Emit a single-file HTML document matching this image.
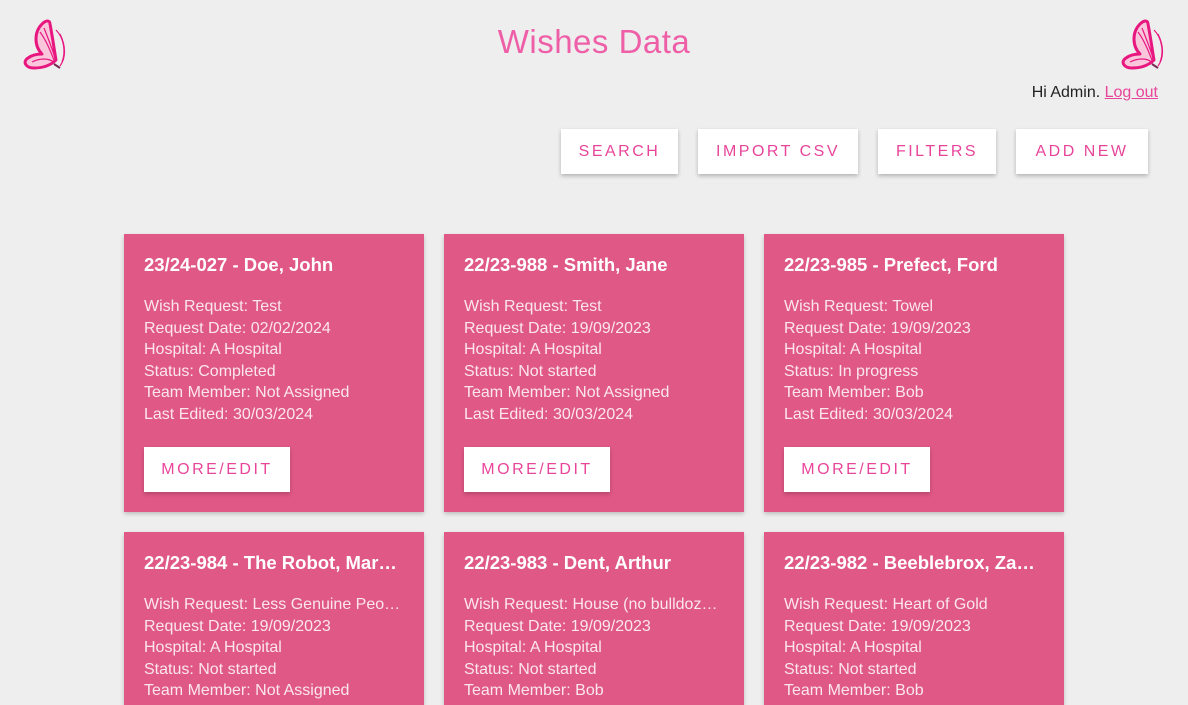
<!DOCTYPE html>
<html style="height:705px;overflow:hidden"><head><meta charset="utf-8"><style>
body{margin:0;background:#eeeeee;font-family:"Liberation Sans",sans-serif;width:1188px;height:705px;overflow:hidden;position:relative}
h1{position:absolute;top:23px;left:0;width:1188px;text-align:center;margin:0;font-weight:normal;font-size:33px;color:#ee5fa8;letter-spacing:0.5px}
.logo{position:absolute;top:18px}
.hi{position:absolute;top:84px;right:30px;font-size:16px;color:#222}
.hi a{color:#e8459a;text-decoration:underline}
.btn{position:absolute;top:129px;height:45px;background:#fff;color:#e8459a;font-size:16px;letter-spacing:2.5px;box-shadow:0 2px 4px rgba(0,0,0,.25);display:flex;align-items:center;justify-content:center}
.card{position:absolute;width:300px;height:278px;background:#e05886;color:#fff;box-shadow:0 2px 4px rgba(0,0,0,.2);overflow:hidden}
.card.b{height:173px}
.card h2{margin:0;position:absolute;left:20px;top:20px;font-size:18.5px;width:254px;white-space:nowrap;overflow:hidden;text-overflow:ellipsis}
.card .d{position:absolute;left:20px;top:62px;font-size:16px;line-height:21.5px;width:260px;color:#fbe6ee}
.card .d div{white-space:nowrap;overflow:hidden;text-overflow:ellipsis}
.card .m{position:absolute;left:20px;top:213px;width:146px;height:45px;background:#fff;color:#e8459a;font-size:16px;letter-spacing:2.5px;display:flex;align-items:center;justify-content:center;box-shadow:0 2px 4px rgba(0,0,0,.2)}
</style></head><body>
<svg class="logo" style="left:20px" width="50" height="54" viewBox="0 0 50 54"><path d="M14 50 C6 50 2 44 8 40 C12 37 18 36 22 36 C14 28 14 14 22 6 C26 2 30 2 30 6 C32 16 34 30 36 42 C30 48 22 50 14 50Z" fill="#f9c6dc" stroke="#e8167f" stroke-width="3" stroke-linejoin="round"/><path d="M20 14 C26 22 30 32 34 42 M24 10 C28 20 32 30 35 40 M12 44 C20 40 28 40 34 44 M36 12 C44 20 46 34 42 44 M40 16 C46 28 46 40 40 48" stroke="#e8167f" stroke-width="1.2" fill="none"/><path d="M34 46 L40 50" stroke="#7a2a55" stroke-width="2"/></svg>
<svg class="logo" style="left:1118px" width="50" height="54" viewBox="0 0 50 54"><path d="M14 50 C6 50 2 44 8 40 C12 37 18 36 22 36 C14 28 14 14 22 6 C26 2 30 2 30 6 C32 16 34 30 36 42 C30 48 22 50 14 50Z" fill="#f9c6dc" stroke="#e8167f" stroke-width="3" stroke-linejoin="round"/><path d="M20 14 C26 22 30 32 34 42 M24 10 C28 20 32 30 35 40 M12 44 C20 40 28 40 34 44 M36 12 C44 20 46 34 42 44 M40 16 C46 28 46 40 40 48" stroke="#e8167f" stroke-width="1.2" fill="none"/><path d="M34 46 L40 50" stroke="#7a2a55" stroke-width="2"/></svg>
<h1>Wishes Data</h1>
<div class="hi">Hi Admin. <a>Log out</a></div>
<div class="btn" style="left:561px;width:117px">SEARCH</div>
<div class="btn" style="left:698px;width:160px">IMPORT CSV</div>
<div class="btn" style="left:878px;width:118px">FILTERS</div>
<div class="btn" style="left:1016px;width:132px">ADD NEW</div>

<div class="card" style="left:124px;top:234px"><h2>23/24-027 - Doe, John</h2><div class="d"><div>Wish Request: Test</div><div>Request Date: 02/02/2024</div><div>Hospital: A Hospital</div><div>Status: Completed</div><div>Team Member: Not Assigned</div><div>Last Edited: 30/03/2024</div></div><div class="m">MORE/EDIT</div></div>
<div class="card" style="left:444px;top:234px"><h2>22/23-988 - Smith, Jane</h2><div class="d"><div>Wish Request: Test</div><div>Request Date: 19/09/2023</div><div>Hospital: A Hospital</div><div>Status: Not started</div><div>Team Member: Not Assigned</div><div>Last Edited: 30/03/2024</div></div><div class="m">MORE/EDIT</div></div>
<div class="card" style="left:764px;top:234px"><h2>22/23-985 - Prefect, Ford</h2><div class="d"><div>Wish Request: Towel</div><div>Request Date: 19/09/2023</div><div>Hospital: A Hospital</div><div>Status: In progress</div><div>Team Member: Bob</div><div>Last Edited: 30/03/2024</div></div><div class="m">MORE/EDIT</div></div>

<div class="card b" style="left:124px;top:532px"><h2>22/23-984 - The Robot, Marvin</h2><div class="d"><div>Wish Request: Less Genuine People Personalities</div><div>Request Date: 19/09/2023</div><div>Hospital: A Hospital</div><div>Status: Not started</div><div>Team Member: Not Assigned</div><div>Last Edited: 30/03/2024</div></div></div>
<div class="card b" style="left:444px;top:532px"><h2>22/23-983 - Dent, Arthur</h2><div class="d"><div>Wish Request: House (no bulldozers)</div><div>Request Date: 19/09/2023</div><div>Hospital: A Hospital</div><div>Status: Not started</div><div>Team Member: Bob</div><div>Last Edited: 30/03/2024</div></div></div>
<div class="card b" style="left:764px;top:532px"><h2>22/23-982 - Beeblebrox, Zaphod</h2><div class="d"><div>Wish Request: Heart of Gold</div><div>Request Date: 19/09/2023</div><div>Hospital: A Hospital</div><div>Status: Not started</div><div>Team Member: Bob</div><div>Last Edited: 30/03/2024</div></div></div>
</body></html>
